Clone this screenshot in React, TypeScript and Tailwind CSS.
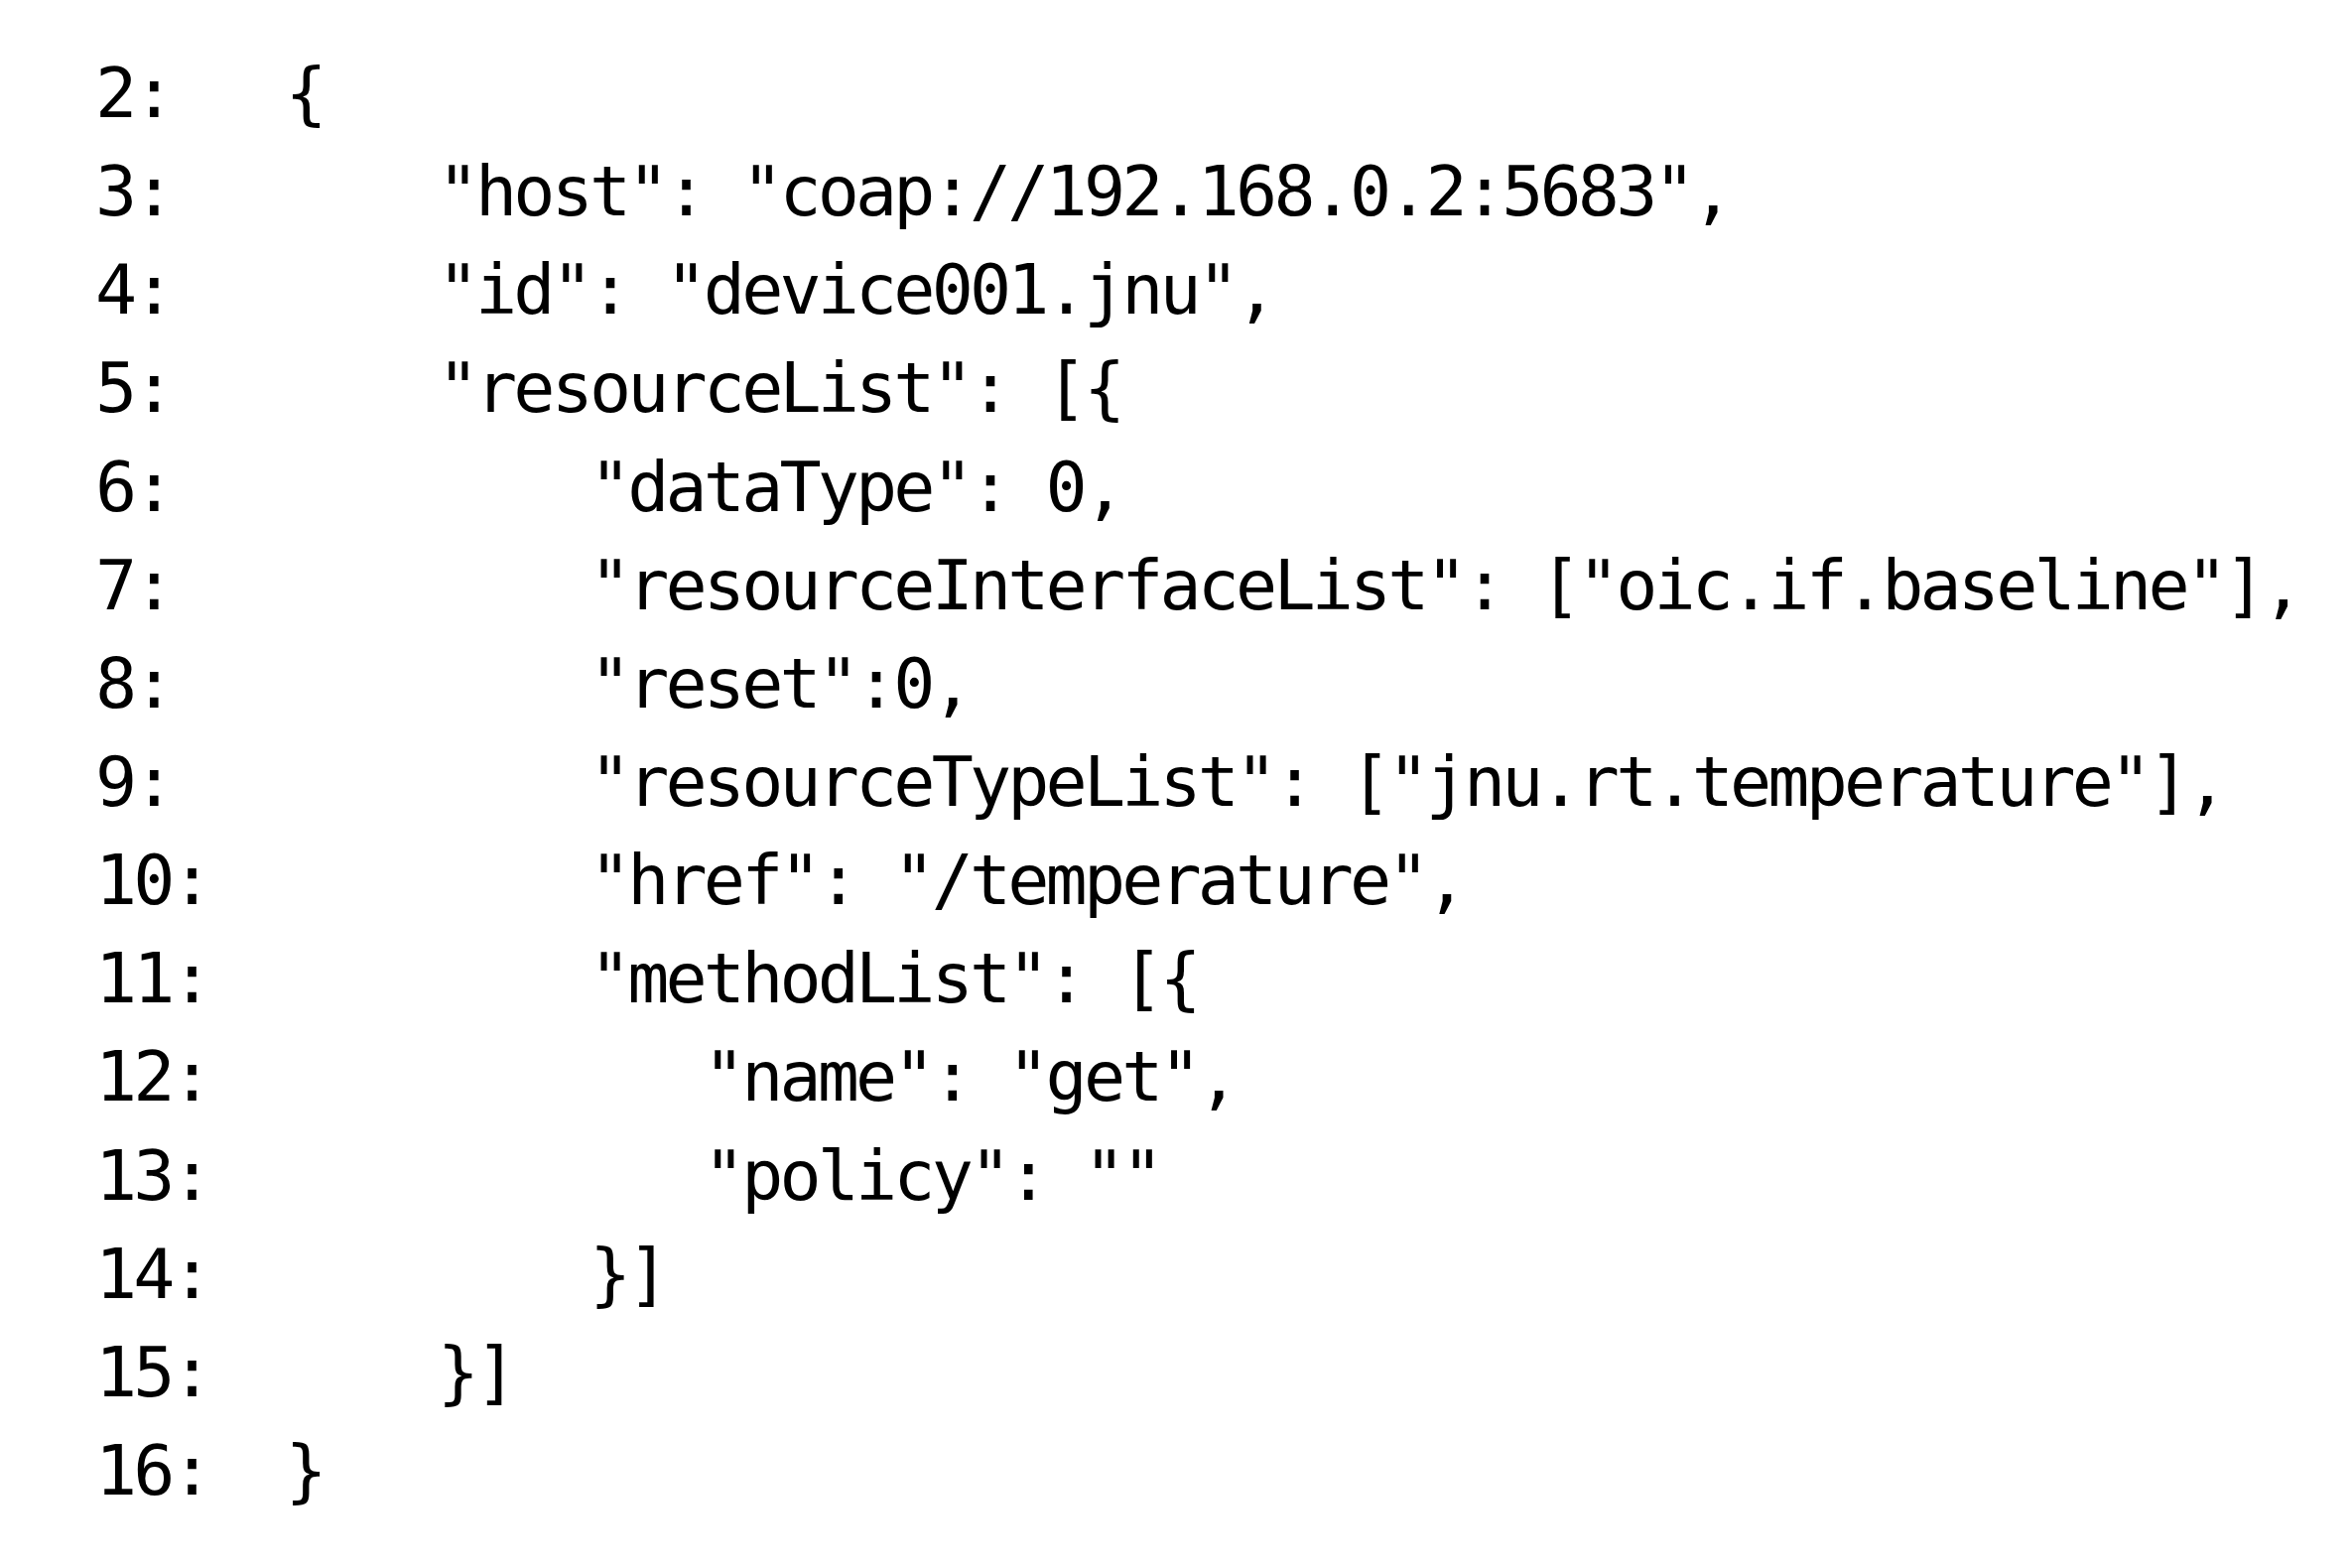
const lines: [string, number, string][] = [
  ["2:", 5, "{"],
  ["3:", 9, '"host": "coap://192.168.0.2:5683",'],
  ["4:", 9, '"id": "device001.jnu",'],
  ["5:", 9, '"resourceList": [{'],
  ["6:", 13, '"dataType": 0,'],
  ["7:", 13, '"resourceInterfaceList": ["oic.if.baseline"],'],
  ["8:", 13, '"reset":0,'],
  ["9:", 13, '"resourceTypeList": ["jnu.rt.temperature"],'],
  ["10:", 13, '"href": "/temperature",'],
  ["11:", 13, '"methodList": [{'],
  ["12:", 16, '"name": "get",'],
  ["13:", 16, '"policy": ""'],
  ["14:", 13, "}]"],
  ["15:", 9, "}]"],
  ["16:", 5, "}"],
];

export default function App() {
  return (
    <div className="w-[2370px] h-[1580px] bg-white overflow-hidden">
      <pre className="pl-[96px] pt-[45px] font-['DejaVu_Sans_Mono',monospace] text-[70px] leading-[99.14px] tracking-[-3.84px] text-black whitespace-pre">
        {lines.map(([num, col, code]) => (
          <div key={num}>{num.padEnd(col, " ") + code}</div>
        ))}
      </pre>
    </div>
  );
}
